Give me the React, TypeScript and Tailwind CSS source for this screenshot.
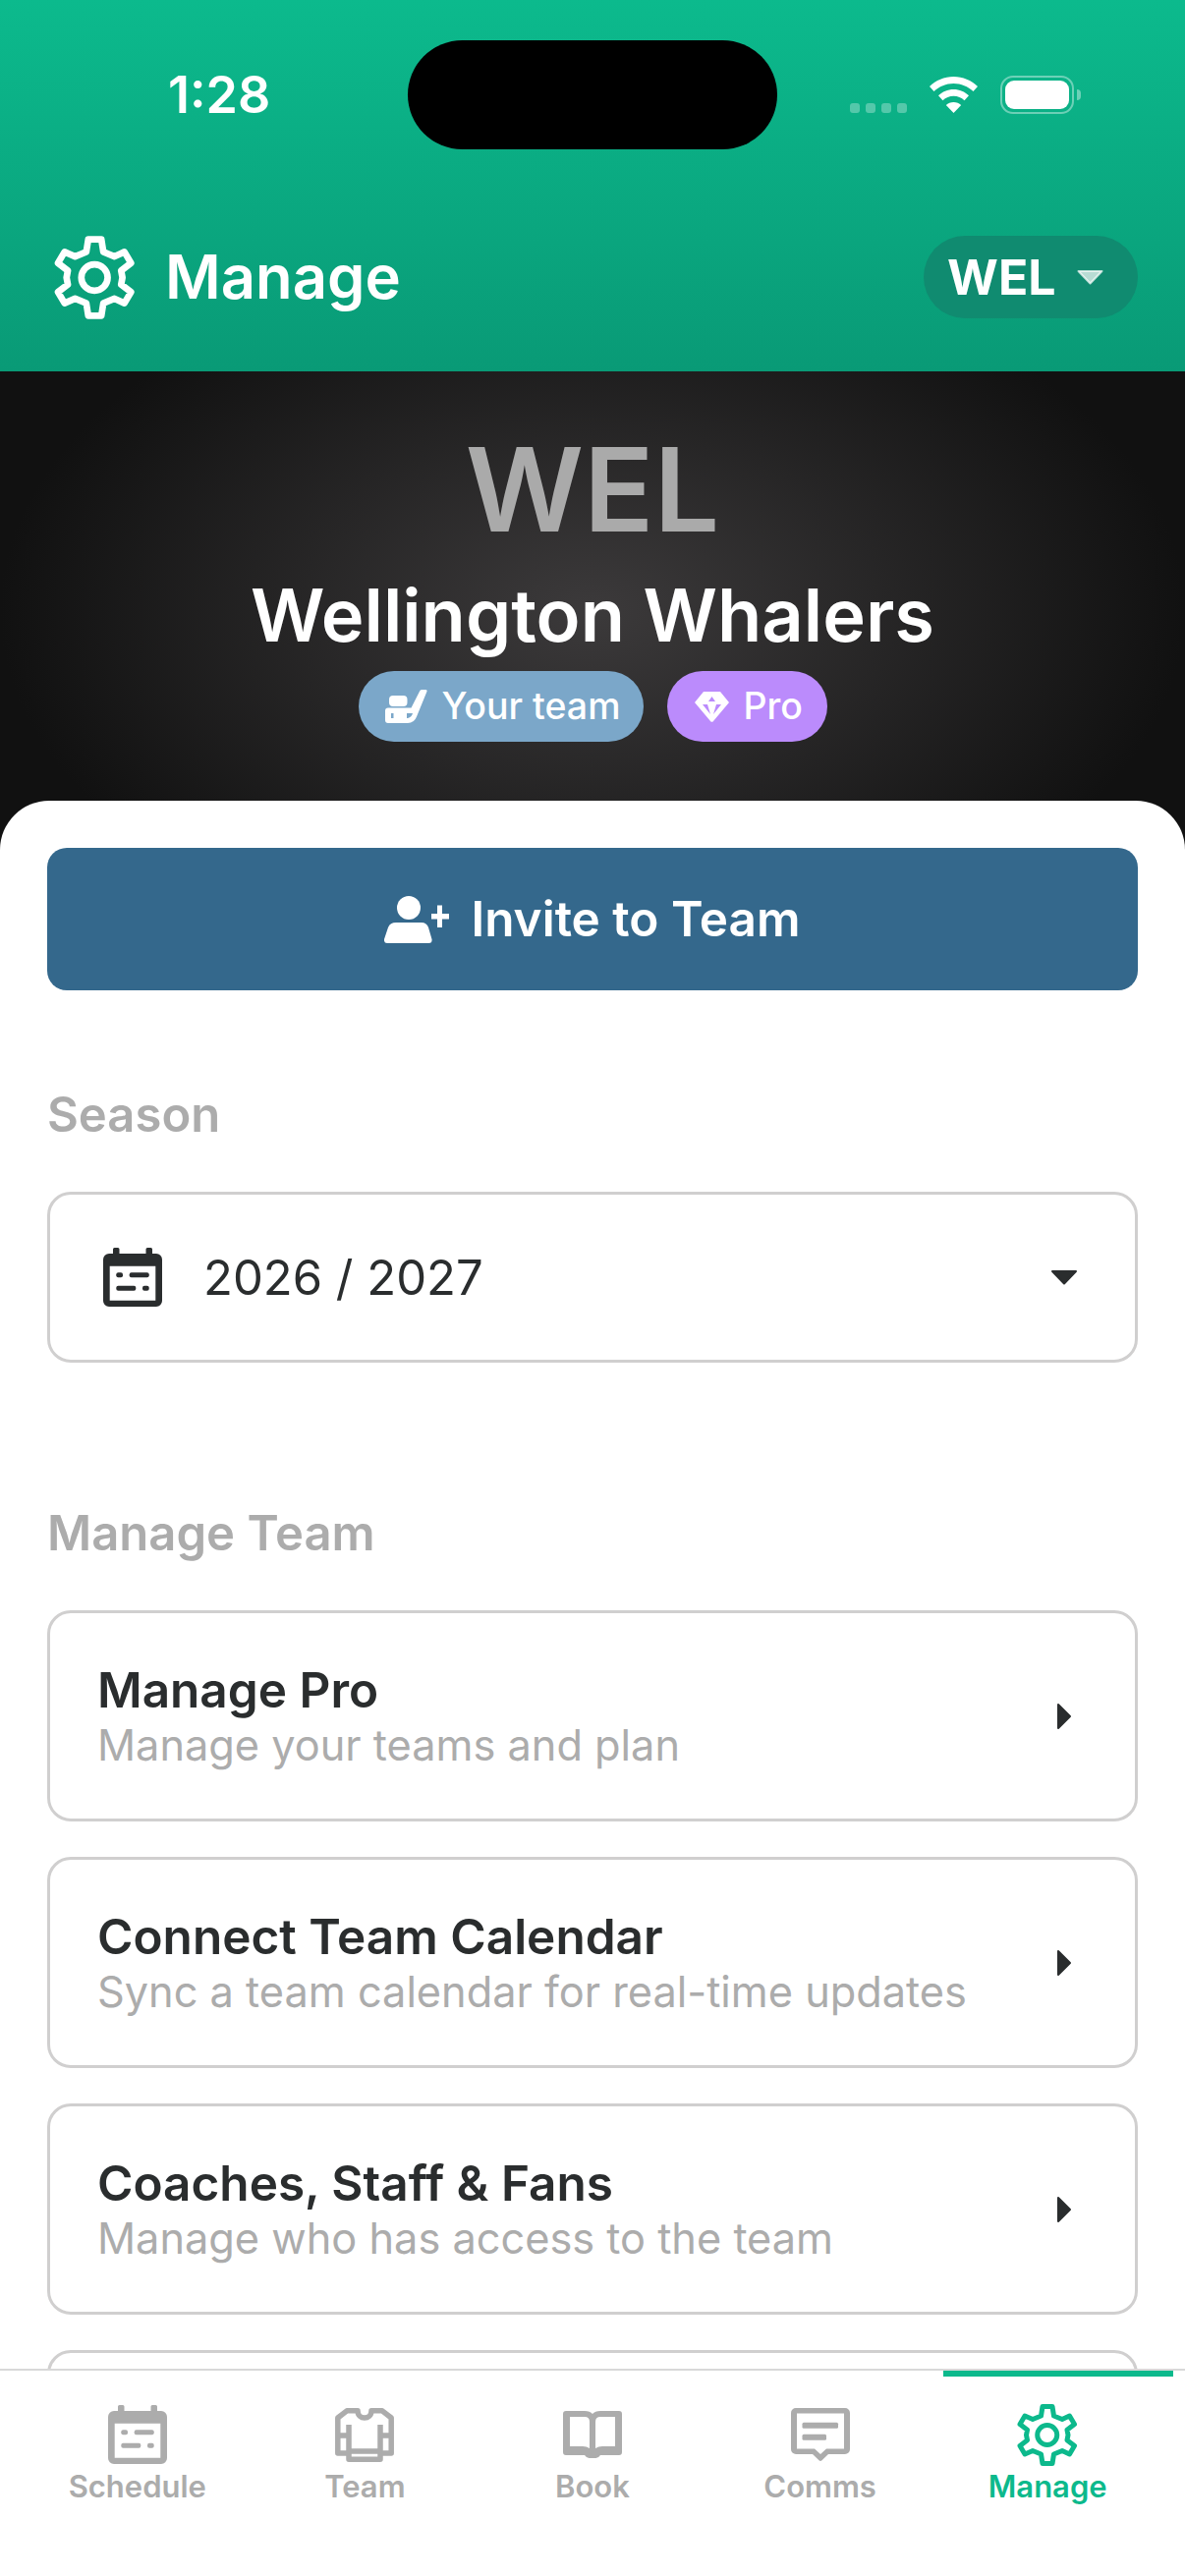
const manageItems = [
  { title: 'Manage Pro', subtitle: 'Manage your teams and plan' },
  { title: 'Connect Team Calendar', subtitle: 'Sync a team calendar for real-time updates' },
  { title: 'Coaches, Staff & Fans', subtitle: 'Manage who has access to the team' },
]

function GearIcon({ className }: { className?: string }) {
  return (
    <svg viewBox="74 56 248 260" className={className} fill="none" stroke="currentColor" strokeWidth="20" strokeLinejoin="round">
      <path d="M178 70h40l6 38 34 14 30-14 20 34-30 23 4 21-4 21 30 23-20 34-30-14-34 14-6 38h-40l-6-38-34-14-32 14-20-34 30-23-4-21 4-21-30-23 20-34 32 14 34-14z" />
      <circle cx="197" cy="186" r="40" />
    </svg>
  )
}

function CalendarIcon({ className }: { className?: string }) {
  return (
    <svg viewBox="0 0 60 60" className={className} fill="currentColor">
      <path
        fillRule="evenodd"
        d="M11.500 0h3.500a1.500 1.500 0 0 1 1.500 1.500V6h27V1.500A1.500 1.500 0 0 1 45 0h3.500A1.500 1.500 0 0 1 50 1.500V6h4a6 6 0 0 1 6 6v42a6 6 0 0 1-6 6H6a6 6 0 0 1-6-6V12a6 6 0 0 1 6-6h4V1.500A1.500 1.500 0 0 1 11.500 0zM6.700 18.700v35h46.600v-35z"
      />
      <rect x="13.300" y="25.300" width="6.700" height="5" rx="2" />
      <rect x="26.700" y="25.300" width="20" height="5" rx="2" />
      <rect x="13.300" y="38.700" width="20" height="5" rx="2" />
      <rect x="40" y="38.700" width="6.700" height="5" rx="2" />
    </svg>
  )
}

function JerseyIcon({ className }: { className?: string }) {
  return (
    <svg viewBox="0 0 60 55" className={className} fill="none" stroke="currentColor" strokeWidth="5.500" strokeLinejoin="round">
      <path d="M23 2.800H12L2.800 10v36H14v6.200h32V46h11.200V10L48 2.800H37C37 12.500 23 12.500 23 2.800z" />
      <path d="M14 17v29M46 17v29M3 28h11M46 28h11M14 44h32" />
    </svg>
  )
}

function BookIcon({ className }: { className?: string }) {
  return (
    <svg viewBox="0 0 60 48" className={className} fill="currentColor">
      <path
        fillRule="evenodd"
        d="M3 0h19q5.500 0 8 3 2.500-3 8-3h19q3 0 3 3v39q0 3-3 3H38q-2 3-4.500 3h-7Q24 48 22 45H3q-3 0-3-3V3q0-3 3-3zM7 6v30h13q4 0 7 2V11q0-5-5-5zm46 0H38q-5 0-5 5v27q3-2 7-2h13z"
      />
    </svg>
  )
}

function CommsIcon({ className }: { className?: string }) {
  return (
    <svg viewBox="0 0 60 54" className={className} fill="currentColor">
      <path
        fillRule="evenodd"
        d="M5 0h50a5 5 0 0 1 5 5v37a5 5 0 0 1-5 5H38l-6.500 6.200a2.200 2.200 0 0 1-3 0L22 47H5a5 5 0 0 1-5-5V5a5 5 0 0 1 5-5zm1 5.500v36h18l6 5.500 6-5.500h18v-36z"
      />
      <rect x="11.500" y="14.700" width="36.500" height="6" rx="1.500" />
      <rect x="11.500" y="26.700" width="24.500" height="6" rx="1.500" />
    </svg>
  )
}

function Caret({ className }: { className?: string }) {
  return (
    <svg viewBox="0 0 28 16" className={className} fill="currentColor" stroke="currentColor" strokeWidth="2" strokeLinejoin="round">
      <path d="M2 2h24L14 14.500z" />
    </svg>
  )
}

const tabs = [
  { label: 'Schedule', icon: <CalendarIcon className="w-[60px] h-[60px]" /> },
  { label: 'Team', icon: <JerseyIcon className="w-[60px] h-[55px]" /> },
  { label: 'Book', icon: <BookIcon className="w-[60px] h-[48px]" /> },
  { label: 'Comms', icon: <CommsIcon className="w-[60px] h-[54px]" /> },
  { label: 'Manage', icon: <GearIcon className="w-[62px] h-[65px] shrink-0" />, active: true },
]

export default function App() {
  return (
    <div className="w-[1206px] h-[2622px] flex flex-col overflow-hidden bg-white font-['Inter',sans-serif]">
      {/* Green app header with status bar */}
      <header className="h-[378px] shrink-0 pt-[41px] bg-gradient-to-b from-[#0cba8d] to-[#099a76] text-white">
        <div className="flex items-center h-[111px]">
          <div className="w-[415px] pl-[171px] text-[52px] font-semibold leading-none">1:28</div>
          <div className="w-[376px] h-[111px] rounded-[56px] bg-black" />
          <div className="flex items-end pl-[74px] h-[39px]">
            <div className="flex gap-[6px] mb-[1px]">
              <span className="w-[10px] h-[10px] rounded-[3px] bg-white/30" />
              <span className="w-[10px] h-[10px] rounded-[3px] bg-white/30" />
              <span className="w-[10px] h-[10px] rounded-[3px] bg-white/30" />
              <span className="w-[10px] h-[10px] rounded-[3px] bg-white/30" />
            </div>
            <svg viewBox="0 0 49 37" className="w-[49px] h-[37px] ml-[23px] mb-[1px]" fill="white">
              <path d="M24.500 0C15 0 6.500 3.800 0 10l4.500 5C9.800 10 16.800 7 24.500 7s14.700 3 20 8L49 10C42.500 3.800 34 0 24.500 0z" />
              <path d="M24.500 13c-6 0-11.500 2.300-15.500 6.300l4.500 5c3-2.800 6.800-4.500 11-4.500s8 1.700 11 4.500l4.500-5c-4-4-9.500-6.300-15.500-6.300z" />
              <path d="M24.500 26c-3 0-5.700 1.200-7.700 3l7.700 8 7.700-8c-2-1.800-4.700-3-7.700-3z" />
            </svg>
            <div className="flex items-center ml-[23px]">
              <div className="w-[75px] h-[39px] rounded-[13px] border-[2.500px] border-white/40 p-[3px]">
                <div className="w-full h-full rounded-[9px] bg-white" />
              </div>
              <div className="w-[4px] h-[11px] ml-[3px] rounded-r-full bg-white/40" />
            </div>
          </div>
        </div>
        <div className="flex items-center justify-between mt-[88px] h-[84px] pl-[55px] pr-[48px]">
          <div className="flex items-center">
            <GearIcon className="w-[83px] h-[87px]" />
            <span className="ml-[30px] text-[61.500px] font-semibold leading-none">Manage</span>
          </div>
          <div className="flex items-center h-[84px] w-[218px] pl-[24px] rounded-[42px] bg-[#108b70]">
            <span className="text-[50px] font-bold leading-none">WEL</span>
            <Caret className="w-[29px] h-[16px] ml-[20px] text-white/70" />
          </div>
        </div>
      </header>

      {/* Team banner */}
      <section className="h-[487px] shrink-0 pt-[60px] flex flex-col items-center bg-[radial-gradient(ellipse_50%_75%_at_50%_50%,#3c3a3b_0%,#111111_100%)]">
        <div className="text-[118px] font-semibold leading-[120px] text-[#aaaaaa]">WEL</div>
        <div className="mt-[23px] text-[74px] font-semibold leading-[90px] text-white">Wellington Whalers</div>
        <div className="mt-[12px] flex gap-[24px] h-[72px]">
          <div className="flex items-center w-[290px] pl-[27px] rounded-full bg-[#7ba7c9] text-white">
            <svg viewBox="0 0 43 34" className="w-[43px] h-[34px]" fill="currentColor">
              <rect x="4" y="6" width="18.500" height="11" rx="4" />
              <path fillRule="evenodd" d="M3 18.500h23.500L35 1.800A2.500 2.500 0 0 1 37.500 0h3.500a1.500 1.500 0 0 1 1.400 2L32 27.500A10 10 0 0 1 22.500 34H3a3 3 0 0 1-3-3V21.500a3 3 0 0 1 3-3zM6 24v5h2.500v-5zm16 0v5h1q4-1 5-5z" />
            </svg>
            <span className="ml-[15px] text-[37.500px] font-medium leading-none">Your team</span>
          </div>
          <div className="flex items-center w-[163px] pl-[28px] rounded-full bg-[#bb8bfc] text-white">
            <svg viewBox="0 0 35 31" className="w-[35px] h-[31px]" fill="currentColor">
              <path fillRule="evenodd" d="M9 0h17l9 11-16 19a2 2 0 0 1-3 0L0 11zM8 13l8 10-3-10zm19 0-8 10 3-10zM14 10h7l-3.500-5z" />
            </svg>
            <span className="ml-[15px] text-[37.500px] font-medium leading-none">Pro</span>
          </div>
        </div>
      </section>

      {/* Scrolling sheet */}
      <main className="relative flex-1 min-h-0 -mt-[50px] overflow-hidden rounded-t-[50px] bg-white px-[48px] pt-[48px]">
        <button className="flex items-center justify-center w-full h-[145px] rounded-[20px] bg-[#34688c] text-white">
          <svg viewBox="0 0 66 48" className="w-[66px] h-[48px]" fill="currentColor">
            <ellipse cx="25" cy="12" rx="12" ry="12" />
            <path d="M12 27h26q5 0 7 5l3.500 12q.5 4-3 4H3q-3.500 0-3-4L4 32q2-5 8-5z" />
            <path d="M48 18h6v-8.500h5V18h7v5.500h-7V32h-5v-8.500h-6z" />
          </svg>
          <span className="ml-[22px] text-[49.500px] font-semibold leading-none">Invite to Team</span>
        </button>

        <h2 className="mt-[97px] text-[49px] font-semibold leading-[60px] text-[#acacac]">Season</h2>
        <div className="mt-[48px] flex items-center h-[174px] rounded-[24px] border-[3px] border-[#d0cfcf] pl-[54px] pr-[58px]">
          <CalendarIcon className="w-[60px] h-[60px] text-[#2a2d2e]" />
          <span className="ml-[42px] flex-1 text-[49px] leading-none text-[#2a2d2e]">2026 / 2027</span>
          <Caret className="w-[28px] h-[16px] text-[#2a2d2e]" />
        </div>

        <h2 className="mt-[144px] text-[49px] font-semibold leading-[60px] text-[#acacac]">Manage Team</h2>
        <div className="mt-[48px] flex flex-col gap-[36px]">
          {manageItems.map((item) => (
            <div
              key={item.title}
              className="flex items-center justify-between shrink-0 h-[215px] rounded-[24px] border-[3px] border-[#d0cfcf] pl-[48px] pr-[64px]"
            >
              <div className="pt-[3px]">
                <div className="text-[49.500px] font-semibold leading-[57px] text-[#2a2d2e]">{item.title}</div>
                <div className="text-[43.300px] leading-[55px] text-[#acacac]">{item.subtitle}</div>
              </div>
              <svg viewBox="0 0 16 28" className="w-[16px] h-[28px] text-[#2a2d2e]" fill="currentColor" stroke="currentColor" strokeWidth="2" strokeLinejoin="round">
                <path d="M2 2v24l12-12z" />
              </svg>
            </div>
          ))}
          {/* next row, scrolled under the tab bar */}
          <div className="shrink-0 h-[215px] rounded-[24px] border-[3px] border-[#d0cfcf]" />
        </div>
      </main>

      {/* Bottom tab bar */}
      <nav className="relative h-[211px] shrink-0 grid grid-cols-5 px-[24px] pt-[34px] bg-white border-t-2 border-[#d8d8d8] z-10">
        <div className="absolute top-0 left-[960px] w-[234px] h-[6px] bg-[#0cb98c]" />
        {tabs.map((tab) => (
          <div key={tab.label} className={`flex flex-col items-center ${tab.active ? 'text-[#0cb98c]' : 'text-[#acacac]'}`}>
            <div className="flex items-center justify-center h-[62px]">{tab.icon}</div>
            <span className="mt-[2px] text-[31px] font-semibold leading-[40px]">{tab.label}</span>
          </div>
        ))}
      </nav>
    </div>
  )
}
